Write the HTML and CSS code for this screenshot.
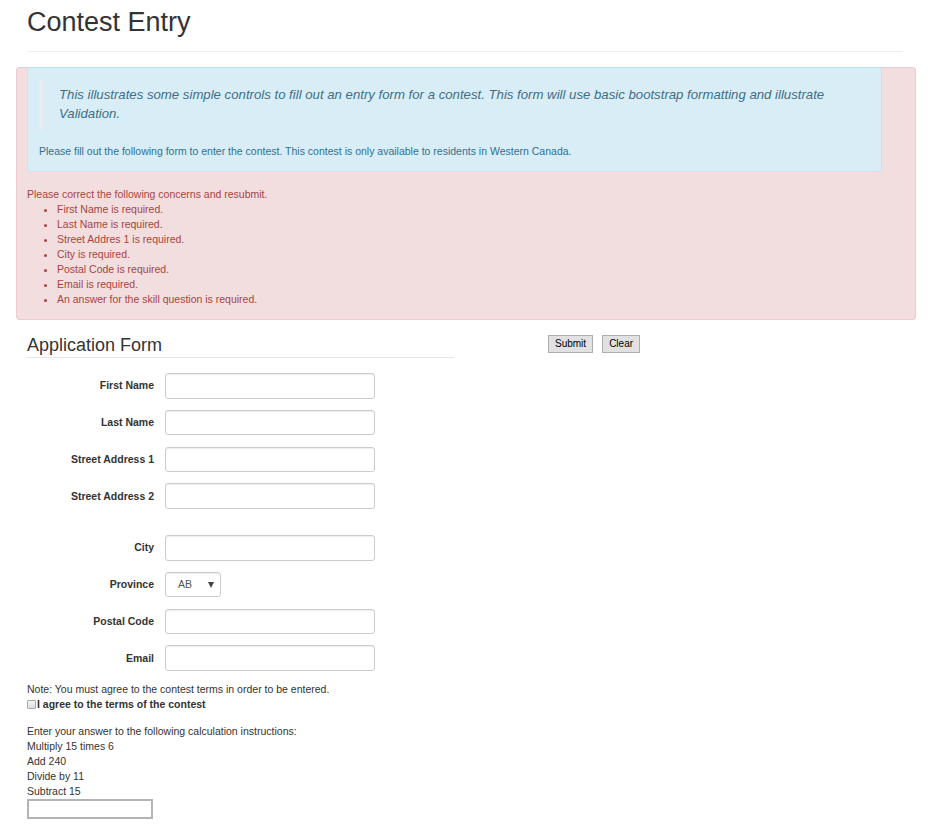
FILE: index.html
```html
<!DOCTYPE html>
<html lang="en">
<head>
<meta charset="utf-8">
<title>Contest Entry</title>
<link rel="stylesheet" href="styles.css">
</head>
<body>
<div class="header-wrap">
  <div class="page-header"><h1>Contest Entry</h1></div>
</div>

<div class="alert">
  <div class="well">
    <blockquote>This illustrates some simple controls to fill out an entry form for a contest. This form will use basic bootstrap formatting and illustrate Validation.</blockquote>
    <p class="intro">Please fill out the following form to enter the contest. This contest is only available to residents in Western Canada.</p>
  </div>
  <p class="alert-lead">Please correct the following concerns and resubmit.</p>
  <ul class="errors">
    <li>First Name is required.</li>
    <li>Last Name is required.</li>
    <li>Street Addres 1 is required.</li>
    <li>City is required.</li>
    <li>Postal Code is required.</li>
    <li>Email is required.</li>
    <li>An answer for the skill question is required.</li>
  </ul>
</div>

<div class="main">
  <div class="form-col">
    <h3 class="legend">Application Form</h3>
    <div class="form-rows">
      <div class="form-row"><label class="lbl">First Name</label><input class="ctl" type="text"></div>
      <div class="form-row"><label class="lbl">Last Name</label><input class="ctl" type="text"></div>
      <div class="form-row"><label class="lbl">Street Address 1</label><input class="ctl" type="text"></div>
      <div class="form-row"><label class="lbl">Street Address 2</label><input class="ctl" type="text"></div>
      <div class="form-row spaced"><label class="lbl">City</label><input class="ctl" type="text"></div>
      <div class="form-row"><label class="lbl">Province</label>
        <div class="select-wrap"><select class="ctl select"><option>AB</option><option>BC</option><option>MB</option><option>SK</option></select><span class="caret"></span></div>
      </div>
      <div class="form-row"><label class="lbl">Postal Code</label><input class="ctl" type="text"></div>
      <div class="form-row"><label class="lbl">Email</label><input class="ctl" type="text"></div>
    </div>
    <p class="note">Note: You must agree to the contest terms in order to be entered.</p>
    <label class="agree"><input type="checkbox" class="cb"><span>I agree to the terms of the contest</span></label>
    <div class="calc">
      <div>Enter your answer to the following calculation instructions:</div>
      <div>Multiply 15 times 6</div>
      <div>Add 240</div>
      <div>Divide by 11</div>
      <div>Subtract 15</div>
      <input class="answer" type="text">
    </div>
  </div>
  <div class="actions">
    <button class="btn" type="button">Submit</button>
    <button class="btn" type="button">Clear</button>
  </div>
</div>
</body>
</html>
```

FILE: styles.css
```css
* { box-sizing: border-box; }

body {
  margin: 0;
  font-family: "Liberation Sans", Arial, sans-serif;
  font-size: 10.5px;
  line-height: 15px;
  color: #333;
  background: #fff;
}

.header-wrap { padding: 0 35px 0 27px; }

.page-header {
  margin-top: 7px;
  padding-bottom: 14px;
  border-bottom: 1px solid #eee;
}

.page-header h1 {
  margin: 0;
  font-size: 27px;
  line-height: 30px;
  font-weight: 500;
  color: #333;
}

.alert {
  margin: 15px 22px 0 16px;
  padding: 0 10px 12px 10px;
  background: #f2dede;
  border: 1px solid #ebccd1;
  border-radius: 3px;
  color: #a94442;
}

.well {
  margin: -1px 23px 0 0;
  padding: 11px 11px 12px 11px;
  background: #d9edf7;
  border: 1px solid #bce8f1;
  border-radius: 3px;
  color: #31708f;
}

.well blockquote {
  margin: 0 0 14px 0;
  padding: 7px 15px 7px 16px;
  border-left: 4px solid #e6ecef;
  font-size: 13.2px;
  line-height: 18.5px;
  font-style: italic;
  color: #3e6d86;
}

.intro { margin: 0; }

.alert-lead { margin: 15px 0 0 0; }

.errors {
  margin: 0;
  padding-left: 30px;
}

.main {
  display: flex;
  align-items: flex-start;
  padding: 15px 27px 0 27px;
}

.form-col { width: 427px; }

.legend {
  margin: 0 0 15px 0;
  padding-bottom: 2px;
  font-size: 18px;
  line-height: 20px;
  font-weight: 500;
  color: #333;
  border-bottom: 1px solid #e5e5e5;
}

.form-rows {
  display: flex;
  flex-direction: column;
  gap: 11.25px;
  margin-bottom: 11.25px;
}

.form-row {
  display: flex;
  align-items: center;
}

.form-row.spaced { margin-top: 15px; }

.lbl {
  width: 127px;
  margin-right: 11px;
  text-align: right;
  font-weight: bold;
}

.ctl {
  width: 210px;
  height: 25.5px;
  padding: 0 9px;
  font: inherit;
  color: #555;
  background: #fff;
  border: 1px solid #ccc;
  border-radius: 3px;
  box-shadow: inset 0 1px 1px rgba(0,0,0,.075);
}

.select-wrap { position: relative; width: 56px; }

.select {
  width: 56px;
  padding-left: 12px;
  -webkit-appearance: none;
  appearance: none;
  color: #555;
}

.caret {
  position: absolute;
  left: 43px;
  top: 10px;
  width: 0;
  height: 0;
  border-left: 3px solid transparent;
  border-right: 3px solid transparent;
  border-top: 6px solid #444;
  pointer-events: none;
}

.note { margin: 0; }

.agree {
  display: flex;
  align-items: center;
  font-weight: bold;
}

.cb {
  -webkit-appearance: none;
  appearance: none;
  width: 9px;
  height: 9px;
  margin: 0 1px 0 0;
  border: 1px solid #a7a7a7;
  border-radius: 1px;
  background: linear-gradient(#f4f4f4, #dedede);
}

.calc { margin-top: 12px; }

.answer {
  display: block;
  width: 126px;
  height: 20px;
  margin: 0;
  padding: 1px 2px;
  border: 2px solid #b4b4b4;
  background: #fff;
  font: inherit;
}

.actions {
  display: flex;
  gap: 9px;
  margin-left: 94px;
}

.btn {
  height: 18px;
  padding: 0 6px;
  font-family: "Liberation Sans", Arial, sans-serif;
  font-size: 10px;
  line-height: 16px;
  color: #000;
  background: #e1e1e1;
  border: 1px solid #adadad;
  border-radius: 0;
}
```
